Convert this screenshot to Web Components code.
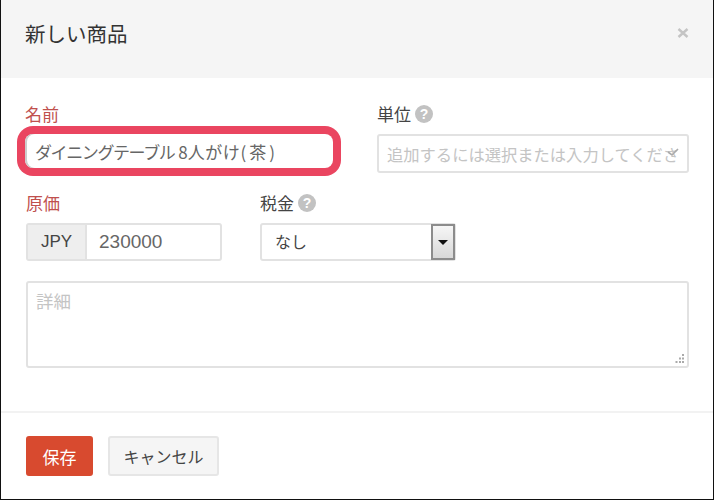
<!DOCTYPE html>
<html lang="ja">
<head>
<meta charset="utf-8">
<title>新しい商品</title>
<style>
  html, body { margin: 0; background: #fff; }
  body { font-family: "Noto Sans CJK JP", "Liberation Sans", sans-serif; color: #444; }
</style>
</head>
<body>
<x-modal>
  <span slot="title">新しい商品</span>
  <div style="display:grid;grid-template-columns:308px 312px;column-gap:44px;padding-left:24px">
    <x-field label="名前" required>
      <x-text-box highlight><span style="letter-spacing:-1.4px">ダイニングテーブル</span> 8<span style="letter-spacing:.6px">人がけ</span><span style="letter-spacing:3px">(茶)</span></x-text-box>
    </x-field>
    <x-field label="単位" help>
      <x-text-box muted chevron>追加するには選択または入力してください</x-text-box>
    </x-field>
  </div>
  <div style="display:grid;grid-template-columns:196px 196px;column-gap:38px;padding:20px 0 0 25px">
    <x-field label="原価" required>
      <x-addon-box addon="JPY" value="230000"></x-addon-box>
    </x-field>
    <x-field label="税金" help>
      <x-select-box value="なし"></x-select-box>
    </x-field>
  </div>
  <div style="padding:20px 24px 0 25px">
    <x-area-box placeholder="詳細"></x-area-box>
  </div>
  <x-btn slot="footer" kind="primary">保存</x-btn>
  <x-btn slot="footer">キャンセル</x-btn>
</x-modal>

<script>
const BOX = `box-sizing:border-box;border:2px solid #e2e2e2;border-radius:3px;background:#fff;`;

class XModal extends HTMLElement {
  constructor() {
    super();
    this.attachShadow({ mode: "open" }).innerHTML = `
      <style>
        :host{display:flex;flex-direction:column;box-sizing:border-box;width:714px;height:500px;background:#fff;border:solid #111;border-width:0 1px 1px 1px;overflow:hidden}
        header{flex:0 0 78px;box-sizing:border-box;background:#f5f5f5;display:flex;align-items:center;justify-content:space-between;padding:0 24px 12px 24px;font-size:20.5px;line-height:28px;color:#333}
        .x{width:12px;height:10px;color:#c4c4c4}
        main{flex:0 0 335px;box-sizing:border-box;padding-top:26px;border-bottom:2px solid #f2f2f2}
        footer{flex:1;display:flex;align-items:flex-start;gap:15px;padding:23px 0 0 25px}
      </style>
      <header><slot name="title"></slot>
        <svg class="x" viewBox="0 0 12 10"><path d="M1.500 1l9 8M10.500 1l-9 8" stroke="currentColor" stroke-width="2.400" fill="none"/></svg>
      </header>
      <main><slot></slot></main>
      <footer><slot name="footer"></slot></footer>`;
  }
}

class XField extends HTMLElement {
  constructor() {
    super();
    this.attachShadow({ mode: "open" });
  }
  connectedCallback() {
    const help = this.hasAttribute("help");
    this.shadowRoot.innerHTML = `
      <style>
        :host{display:block;min-width:0}
        label{display:flex;align-items:center;gap:4px;height:20px;margin-bottom:10px;font-size:17px;line-height:20px;color:${this.hasAttribute("required") ? "#c0504d" : "#444"}}
        .q{width:18px;height:18px;border-radius:50%;background:#c2c2c2;color:#fff;font:700 14px/18px "Liberation Sans",sans-serif;text-align:center}
      </style>
      <label>${this.getAttribute("label")}${help ? `<span class="q">?</span>` : ""}</label>
      <slot></slot>`;
  }
}

class XTextBox extends HTMLElement {
  constructor() {
    super();
    this.attachShadow({ mode: "open" });
  }
  connectedCallback() {
    const muted = this.hasAttribute("muted");
    const hi = this.hasAttribute("highlight");
    this.shadowRoot.innerHTML = `
      <style>
        :host{display:block}
        .box{${BOX}position:relative;height:39px;padding:0 9px 0 8px;display:flex;align-items:center;font-size:${muted ? 16.3 : 17}px;color:${muted ? "#c4c4c4" : "#666"}}
        .txt{flex:1;min-width:0;overflow:hidden;white-space:nowrap}
        .hi{height:34px;margin-top:1px;border:0;padding:0 10px;border-radius:8px;box-shadow:0 0 0 8px #ea4560,inset 2px 0 0 #ccc}
        svg{position:absolute;right:8px;top:12px;width:12px;height:10px;color:#aaa}
      </style>
      <div class="box ${hi ? "hi" : ""}"><div class="txt"><slot></slot></div>
        ${this.hasAttribute("chevron") ? `<svg viewBox="0 0 12 10"><path d="M1 4l4 3 6-6" stroke="currentColor" stroke-width="1.600" fill="none"/></svg>` : ""}
      </div>`;
  }
}

class XAddonBox extends HTMLElement {
  constructor() {
    super();
    this.attachShadow({ mode: "open" });
  }
  connectedCallback() {
    this.shadowRoot.innerHTML = `
      <style>
        :host{display:flex;${BOX}height:38px;line-height:34px;color:#666;font-family:"Liberation Sans",sans-serif}
        b{flex:0 0 59px;font-weight:400;background:#eee;border-right:2px solid #e2e2e2;box-sizing:border-box;text-align:center;color:#444;font-size:17px}
        span{padding-left:12px;font-size:19px}
      </style>
      <b>${this.getAttribute("addon")}</b><span>${this.getAttribute("value")}</span>`;
  }
}

class XSelectBox extends HTMLElement {
  constructor() {
    super();
    this.attachShadow({ mode: "open" });
  }
  connectedCallback() {
    this.shadowRoot.innerHTML = `
      <style>
        :host{display:flex;${BOX}height:38px;align-items:center;justify-content:space-between;padding-left:13px;font-size:16px;color:#444}
        .arrow{box-sizing:border-box;width:24px;height:36px;border:2px solid #8c8c8c;background:linear-gradient(#f6f6f6,#d8d8d8);display:flex;align-items:center;justify-content:center;margin-right:-1px}
        i{width:0;height:0;border:5px solid transparent;border-top:5px solid #111;border-bottom:0}
        span{position:relative;top:-1px}
      </style>
      <span>${this.getAttribute("value")}</span><div class="arrow"><i></i></div>`;
  }
}

class XAreaBox extends HTMLElement {
  constructor() {
    super();
    this.attachShadow({ mode: "open" });
  }
  connectedCallback() {
    this.shadowRoot.innerHTML = `
      <style>
        :host{display:block;position:relative;${BOX}height:87px;padding:6px 8px;font-size:17.500px;line-height:24px;color:#c4c4c4}
        svg{position:absolute;right:2px;bottom:2px;width:11px;height:11px;color:#aaa}
      </style>
      ${this.getAttribute("placeholder")}
      <svg viewBox="0 0 11 11" fill="currentColor"><path d="M8 1h2v2H8zM5 4.500h2v2H5zM8 4.500h2v2H8zM1.500 8h2v2h-2zM5 8h2v2H5zM8 8h2v2H8z"/></svg>`;
  }
}

class XBtn extends HTMLElement {
  constructor() {
    super();
    this.attachShadow({ mode: "open" }).innerHTML = `
      <style>
        :host{display:inline-flex;box-sizing:border-box;height:40px;padding:0 13.500px;align-items:center;border-radius:3px;border:2px solid #e6e6e6;background:#f5f5f5;color:#444;font-size:16px}
        :host([kind=primary]){padding:0 14.500px;background:#d84a2f;border-color:#d84a2f;color:#fff;font-size:17px}
      </style><slot></slot>`;
  }
}

customElements.define("x-modal", XModal);
customElements.define("x-field", XField);
customElements.define("x-text-box", XTextBox);
customElements.define("x-addon-box", XAddonBox);
customElements.define("x-select-box", XSelectBox);
customElements.define("x-area-box", XAreaBox);
customElements.define("x-btn", XBtn);
</script>
</body>
</html>
